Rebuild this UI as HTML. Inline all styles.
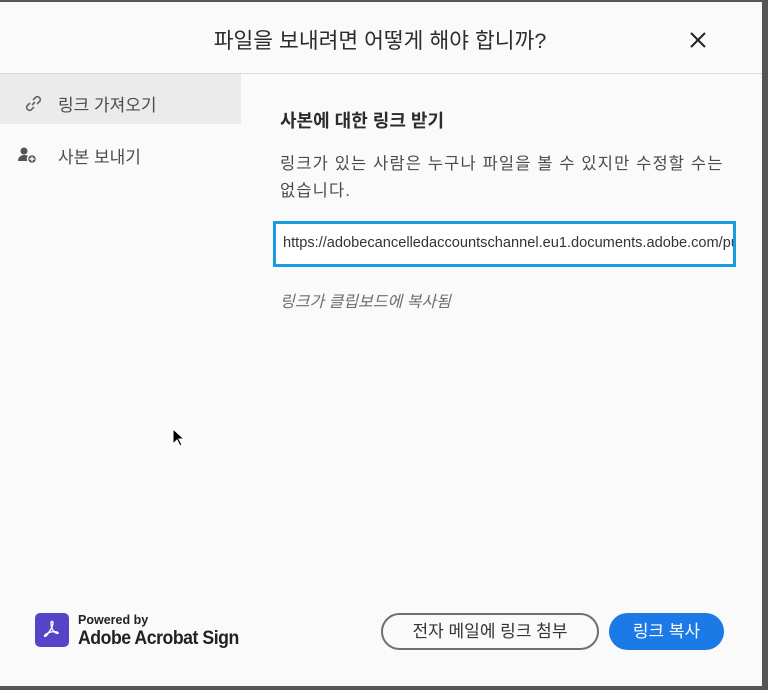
<!DOCTYPE html>
<html><head><meta charset="utf-8"><style>
*{margin:0;padding:0;box-sizing:border-box}
body{width:768px;height:690px;background:#555;font-family:"Liberation Sans","Noto Sans CJK KR",sans-serif;position:relative;overflow:hidden}
.dlg{position:absolute;left:0;top:2px;width:762px;height:684px;background:#fafafa}
.hdr{position:absolute;left:0;top:0;width:762px;height:72px;border-bottom:1px solid #dadada}
.title{position:absolute;left:0;width:760px;top:22px;text-align:center;font-size:21.5px;color:#2c2c2c}
.x{position:absolute;left:688px;top:28px}
.side{position:absolute;left:0;top:72px;width:241px;height:612px;background:#fafafa}
.sel{position:absolute;left:0;top:0;width:241px;height:50px;background:#ebebeb}
.item{position:absolute;left:58px;font-size:17px;color:#4b4b4b}
.main{position:absolute;left:241px;top:72px;width:521px;height:612px;background:#fafafa}
h2{position:absolute;left:39px;top:33px;font-size:18px;color:#2c2c2c;font-weight:bold}
.desc{position:absolute;left:39px;top:77px;width:470px;font-size:16.5px;line-height:27px;color:#4b4b4b;white-space:nowrap;letter-spacing:1.15px}
.inp{position:absolute;left:32px;top:147px;width:463px;height:46px;border:3px solid #1a9de0;background:#fff;font-size:14.6px;color:#333;padding:11px 0 0 7px;white-space:nowrap;overflow:hidden}
.ok{position:absolute;left:39px;top:214px;font-size:16px;font-style:italic;color:#6e6e6e}
.b1{position:absolute;left:140px;top:539px;width:218px;height:37px;border:2px solid #707070;border-radius:19px;font-size:17px;color:#333;text-align:center;line-height:33px}
.b2{position:absolute;left:368px;top:539px;width:115px;height:37px;border-radius:19px;background:#1c7ae6;color:#fff;font-size:17px;text-align:center;line-height:37px}
</style></head><body>
<div class="dlg">
<div class="hdr"><div class="title">파일을 보내려면 어떻게 해야 합니까?</div>
<svg class="x" width="20" height="20" viewBox="0 0 20 20"><path d="M3 3L17 17M17 3L3 17" stroke="#222" stroke-width="2"/></svg></div>
<div class="side">
<div class="sel"></div>
<svg style="position:absolute;left:23px;top:19px" width="21" height="21" viewBox="0 0 21 21" fill="none" stroke="#666" stroke-width="1.6"><path d="M9 12l3-3M7 10l-3 3a3 3 0 004 4l3-3M14 11l3-3a3 3 0 00-4-4l-3 3"/></svg>
<div class="item" style="top:17px">링크 가져오기</div>
<svg style="position:absolute;left:18px;top:72px" width="20" height="18" viewBox="0 0 20 18"><circle cx="6" cy="5" r="3.5" fill="#555"/><path d="M0 15c0-4 3-6 6-6s5 1 6 3v3z" fill="#555"/><circle cx="14" cy="13" r="4.5" fill="#555" stroke="#fafafa" stroke-width="1.5"/><path d="M14 10.5v5M11.5 13h5" stroke="#fff" stroke-width="1.4"/></svg>
<div class="item" style="top:69px">사본 보내기</div>
<div style="position:absolute;left:35px;top:539px;width:34px;height:34px;border-radius:5px;background:#5544c8"></div>
<svg style="position:absolute;left:40px;top:544px" width="24" height="24" viewBox="0 0 24 24" fill="none" stroke="#fff" stroke-width="1.4"><path d="M11 5c0-2 2-2 2 0 0 3-4 10-7 13-1 1-2 0-1-1 3-3 9-4 12-3 2 1 1 2-1 1-3-1-5-6-5-10z"/></svg>
<div style="position:absolute;left:78px;top:539px;font-size:12.5px;font-weight:bold;color:#222">Powered by</div>
<div style="position:absolute;left:78px;top:554px;font-size:19px;font-weight:bold;color:#222;letter-spacing:-0.5px;white-space:nowrap;transform:scaleX(0.93);transform-origin:left">Adobe Acrobat Sign</div>
</div>
<div class="main">
<h2>사본에 대한 링크 받기</h2>
<div class="desc">링크가 있는 사람은 누구나 파일을 볼 수 있지만 수정할 수는<br>없습니다.</div>
<div class="inp">https://adobecancelledaccountschannel.eu1.documents.adobe.com/public</div>
<div class="ok">링크가 클립보드에 복사됨</div>
<div class="b1">전자 메일에 링크 첨부</div>
<div class="b2">링크 복사</div>
</div>
</div>
<svg style="position:absolute;left:172px;top:428px" width="14" height="20" viewBox="0 0 14 20"><path d="M1 1v15l4-4 3 6 2-1-3-6h5z" fill="#000" stroke="#fff" stroke-width="1"/></svg>
</body></html>
